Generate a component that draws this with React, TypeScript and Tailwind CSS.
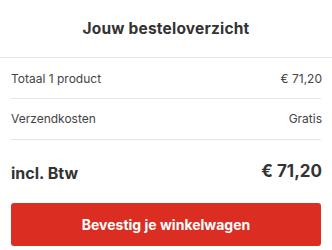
export default function App() {
  return (
    <div className="w-[332px] h-[250px] bg-white text-[#3a3a3a]" style={{ fontFamily: "Inter, 'Noto Sans', sans-serif" }}>
      <div className="h-[58px] flex items-center justify-center border-b border-[#e6e6e6]">
        <h2 className="text-[15.5px] font-bold text-[#333] tracking-[0.2px]">Jouw besteloverzicht</h2>
      </div>
      <div className="px-[11px]">
        <div className="h-[41px] flex items-center justify-between border-b border-[#e6e6e6] text-[12px] text-[#444] pt-[1px]">
          <span>Totaal 1 product</span>
          <span className="mr-[-1px]">€ 71,20</span>
        </div>
        <div className="h-[41px] flex items-center justify-between border-b border-[#e6e6e6] text-[12px] text-[#444]">
          <span>Verzendkosten</span>
          <span className="mr-[-1px]">Gratis</span>
        </div>
        <div className="h-[63px] flex items-center justify-between text-[#333] font-bold">
          <span className="text-[16px] mt-[2px]">incl. Btw</span>
          <span className="text-[17px] mr-[-1px]">€ 71,20</span>
        </div>
        <button className="w-full h-[43px] rounded-[3px] bg-[#db2d21] text-white font-bold text-[14px]">
          Bevestig je winkelwagen
        </button>
      </div>
    </div>
  );
}
